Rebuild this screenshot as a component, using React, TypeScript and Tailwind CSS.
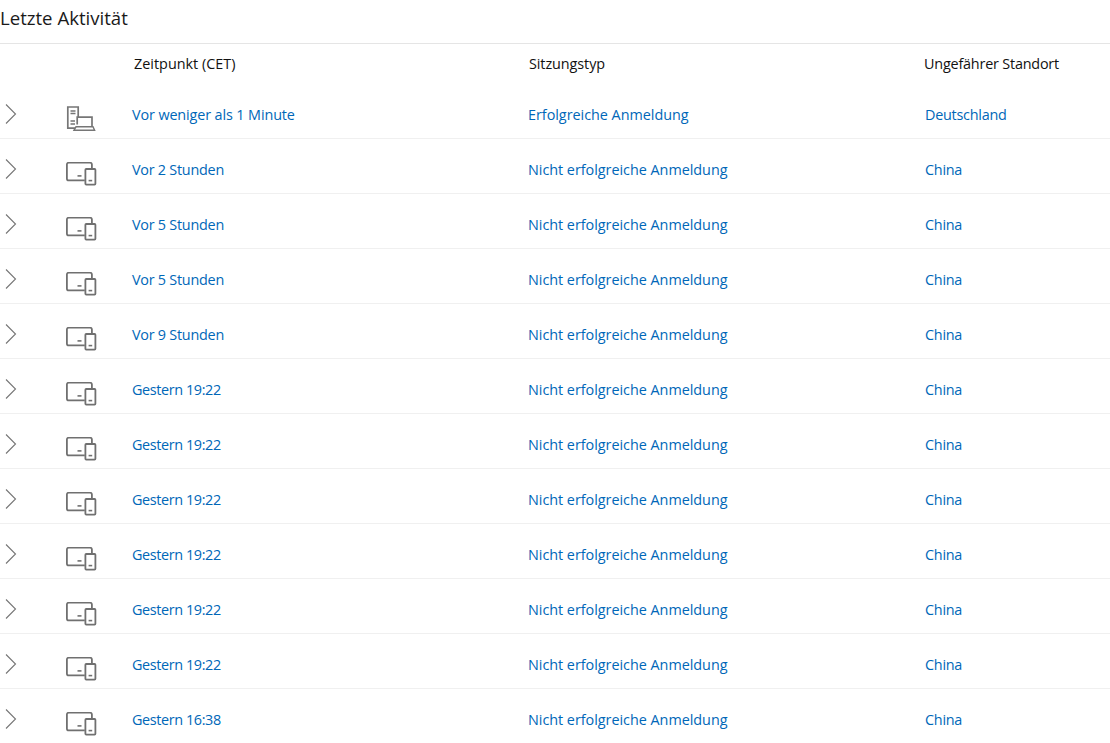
const rows: [string, string, string][] = [
  ["Vor weniger als 1 Minute", "Erfolgreiche Anmeldung", "Deutschland"],
  ["Vor 2 Stunden", "Nicht erfolgreiche Anmeldung", "China"],
  ["Vor 5 Stunden", "Nicht erfolgreiche Anmeldung", "China"],
  ["Vor 5 Stunden", "Nicht erfolgreiche Anmeldung", "China"],
  ["Vor 9 Stunden", "Nicht erfolgreiche Anmeldung", "China"],
  ["Gestern 19:22", "Nicht erfolgreiche Anmeldung", "China"],
  ["Gestern 19:22", "Nicht erfolgreiche Anmeldung", "China"],
  ["Gestern 19:22", "Nicht erfolgreiche Anmeldung", "China"],
  ["Gestern 19:22", "Nicht erfolgreiche Anmeldung", "China"],
  ["Gestern 19:22", "Nicht erfolgreiche Anmeldung", "China"],
  ["Gestern 19:22", "Nicht erfolgreiche Anmeldung", "China"],
  ["Gestern 16:38", "Nicht erfolgreiche Anmeldung", "China"],
];

function Chevron() {
  return (
    <svg width="12" height="20" viewBox="0 0 12 20" fill="none" stroke="#767676" strokeWidth="1.1" className="block">
      <path d="M1 0.5 L10.5 10 L1 19.5" />
    </svg>
  );
}

function ServerLaptop() {
  return (
    <svg width="30" height="26" viewBox="0 0 30 26" fill="none" stroke="#767676" strokeWidth="1.7" className="block">
      <path d="M9.5 22.2 H1.8 V1 H12.2 V11" />
      <path d="M4.5 5 H9.5 M4.5 7.5 H9.5 M4.5 15 H9 M4.5 18 H9" strokeWidth="1.3" />
      <path d="M11.2 18.5 V11.2 H26 V20.5" />
      <path d="M10 20.8 H27 L28.6 24.2 H8 Z" fill="#fff" strokeWidth="1.4" />
    </svg>
  );
}

function Devices() {
  return (
    <svg width="31" height="24" viewBox="0 0 31 24" fill="none" stroke="#707070" strokeWidth="1.8" className="block">
      <path d="M18.8 18.4 H2.8 Q0.9 18.4 0.9 16.4 V2.6 Q0.9 0.7 2.8 0.7 H24 Q25.9 0.7 25.9 2.6 V6.5" />
      <path d="M11.5 13.9 H15.5" strokeWidth="1.6" />
      <rect x="19.4" y="7" width="10" height="15.6" rx="0.8" />
      <path d="M22.6 18.6 H26.2" strokeWidth="1.6" />
    </svg>
  );
}

function timeTracking(label: string) {
  if (label.startsWith("Gestern")) return "tracking-[-0.38px]";
  if (label.includes("weniger")) return "tracking-[-0.12px]";
  return "tracking-[-0.25px]";
}

export default function App() {
  return (
    <div className="w-[1110px] h-[743px] overflow-hidden bg-white font-['Open_Sans','Noto_Sans',sans-serif]">
      <h1 className="h-11 border-b border-[#e5e5e5] text-[18.6px] leading-[36px] font-normal text-[#1a1a1a]">
        Letzte Aktivität
      </h1>
      <div className="grid grid-cols-[395px_395px_1fr] h-10 pl-[134px] pt-[10px] text-[14.4px] leading-5 text-[#111]">
        <span className="whitespace-nowrap">Zeitpunkt (CET)</span>
        <span className="whitespace-nowrap tracking-[-0.08px]">Sitzungstyp</span>
        <span className="whitespace-nowrap tracking-[-0.2px]">Ungefährer Standort</span>
      </div>
      {rows.map((r, i) => (
        <div
          key={i}
          className="grid grid-cols-[61px_66px_396px_397px_1fr] items-center h-[55px] pl-[5px] pt-2 border-b border-[#f0f0f0] text-[14.4px] leading-5 text-[#0067b8]"
        >
          <span className="-translate-y-px"><Chevron /></span>
          <span className="translate-y-[4px]">
            {i === 0 ? <ServerLaptop /> : <Devices />}
          </span>
          <span className={timeTracking(r[0])}>{r[0]}</span>
          <span className="tracking-[-0.03px]">{r[1]}</span>
          <span className="tracking-[-0.25px]">{r[2]}</span>
        </div>
      ))}
    </div>
  );
}
